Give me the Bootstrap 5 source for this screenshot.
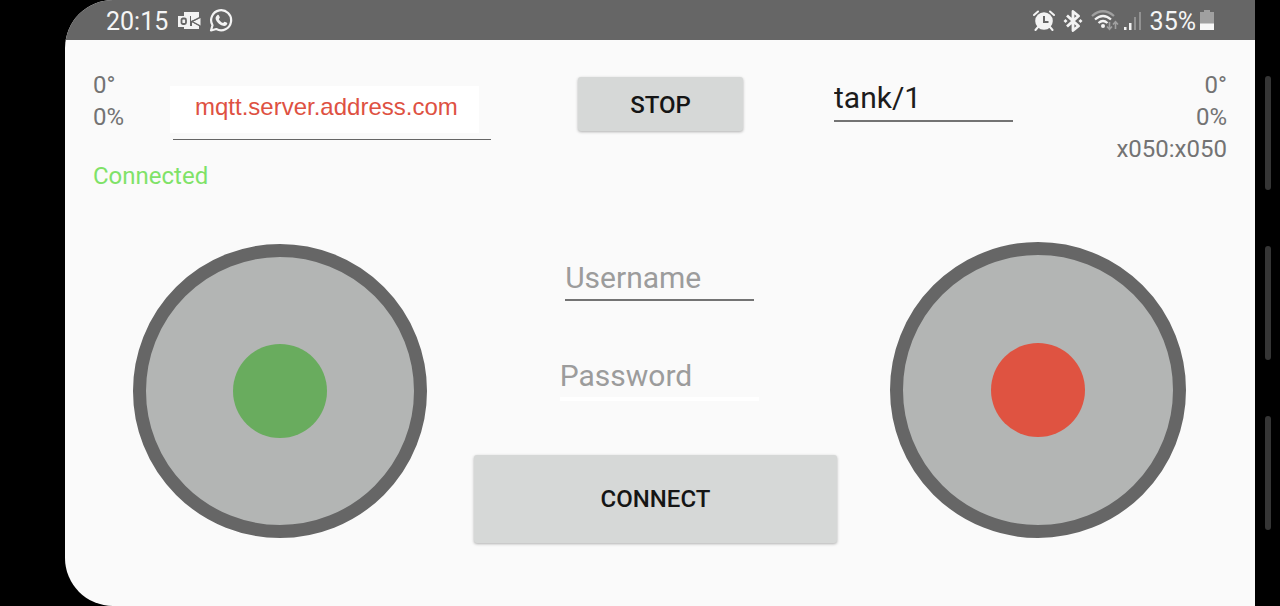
<!DOCTYPE html>
<html lang="en">
<head>
<meta charset="utf-8">
<meta name="viewport" content="width=device-width, initial-scale=1">
<title>Tank remote</title>
<link href="https://cdn.jsdelivr.net/npm/bootstrap@5.3.0/dist/css/bootstrap.min.css" rel="stylesheet">
<style>
  body { background: #000; color: #737373; font-family: Roboto, "Liberation Sans", sans-serif; font-size: 24px; line-height: 32px; }
  .bezel-left { flex: 0 0 65px; }
  .bezel-right { flex: 0 0 25px; padding-top: 76px; gap: 56px; }
  .edge-bar { width: 6px; height: 114px; background: #353535; }
  .screen { background: #fafafa; border-radius: 48px 0 0 48px; overflow: hidden; min-width: 0; }
  .status-bar { background: #666; color: #f5f5f5; height: 40px; padding: 2px 41px 0 41px; font-size: 25px; }
  .status-bar span { padding-top: 2px; }
  .status-left { gap: 6px; }
  .controls { padding: 29px 28px 0; }
  .top-grid { display: grid; grid-template-columns: minmax(0, 77fr) minmax(0, 321fr) minmax(0, 87fr) minmax(0, 165fr) minmax(0, 91fr) minmax(0, 179fr) minmax(0, 214fr); align-items: start; }
  .stick-grid { display: grid; grid-template-columns: 40fr 294fr 47fr 363fr 53fr 296fr 41fr; align-items: end; margin-top: 50px; }
  .col-2nd { grid-column: 2; } .col-4th { grid-column: 4; } .col-6th { grid-column: 6; } .col-7th { grid-column: 7; }
  .link-state { color: #7fe268; margin-top: 27px; }
  .server-field { margin-top: 17px; }
  .server-field::after { content: ""; display: block; height: 1px; margin: 6px 0 0 3px; background: #666; }
  .server-input { width: calc(100% - 12px); height: 47px; padding: 0 0 6px 25px; border: 0; border-radius: 0; background: #fff; color: #de5142; font: 24px "Liberation Sans", Arial, sans-serif; }
  .line-input { width: 100%; height: 44px; padding: 0 0 2px; border: 0; border-bottom: 2px solid #737373; border-radius: 0; background: transparent; color: #1c1c1c; font-size: 30px; }
  .line-input::placeholder { color: #9c9c9c; opacity: 1; }
  .topic-input { height: 45px; }
  .user-input { width: 52%; }
  .pass-input { width: 55%; height: 46px; border-bottom: 4px solid #fff; }
  .key-btn { background: #d6d8d7; color: #151515; border: 0; border-radius: 3px; font-size: 24px; font-weight: 500; box-shadow: 0 1px 3px rgba(0, 0, 0, .3); }
  .key-btn:hover { background: #cacccb; }
  .stop-btn { height: 54px; margin-top: 8px; padding-top: 8px; }
  .connect-btn { height: 88px; }
  .stick { aspect-ratio: 1; border: 13px solid #666; border-radius: 50%; background: #b3b5b4; margin-bottom: 5px; }
  .knob { width: 35%; aspect-ratio: 1; border-radius: 50%; }
  .knob-green { background: #69ac5e; }
  .knob-red { background: #df5341; }
  .form-stack { gap: 54px; }
</style>
</head>
<body>
<div class="d-flex min-vh-100">
  <div class="bezel-left"></div>
  <div class="screen flex-grow-1">
    <header class="status-bar d-flex align-items-center justify-content-between">
      <div class="status-left d-flex align-items-center">
        <span>20:15</span>
        <svg class="ms-1" width="24" height="22" viewBox="0 0 24 22" aria-hidden="true">
          <path d="M6 2h15v6l-8 3v-5H6zM6 19v-3h8v-4l7 4v3z" fill="#f3f3f3"/>
          <path d="M14.500 11.800L22.500 8v8z" fill="#f3f3f3"/>
          <path d="M22.500 7L14 11.500l8.500 4.500" fill="none" stroke="#666" stroke-width="1.400"/>
          <rect x="0" y="6" width="12" height="11" fill="#f3f3f3"/>
          <rect x="3.500" y="8.500" width="4.500" height="5.500" rx="1.500" fill="none" stroke="#666" stroke-width="1.800"/>
        </svg>
        <svg width="26" height="24" viewBox="0 0 26 24" aria-hidden="true">
          <path d="M3 21.500l1.500-5.200A10 10 0 1 1 8.300 20z" fill="none" stroke="#f3f3f3" stroke-width="2.200" stroke-linejoin="round"/>
          <path d="M9.200 6.200c.6-.6 1.500-.5 1.800.2l.8 1.900c.2.500-.7 1.400-1 1.900 1 1.900 2.400 3.100 4.300 3.900.5-.5 1.200-1.600 1.700-1.400l2.200 1.100c.6.400.1 1.800-.7 2.500-1.600 1.300-4 .6-5.900-.5-2-1.200-3.700-3.100-4.500-5-.7-1.800-.2-3.500 1.300-4.600z" fill="#f3f3f3"/>
        </svg>
      </div>
      <div class="d-flex align-items-center">
        <svg width="22" height="22" viewBox="0 0 22 22" aria-hidden="true">
          <circle cx="11" cy="11" r="8.800" fill="#f3f3f3"/>
          <path d="M11 6v6h4.500" fill="none" stroke="#666" stroke-width="2"/>
          <path d="M1 5L5 1.500M21 5L17 1.500M5 17l-2.500 3M17 17l2.500 3" stroke="#f3f3f3" stroke-width="2" stroke-linecap="round"/>
        </svg>
        <svg class="ms-2" width="20" height="22" viewBox="0 0 20 22" aria-hidden="true">
          <path d="M4 5.500l11.500 10.500-5.500 4.500V1.500l5.500 4.500L4 16.500" fill="none" stroke="#f3f3f3" stroke-width="2.800" stroke-linejoin="round"/>
          <path d="M.5 11l2-2 2 2-2 2zM15.500 11l2-2 2 2-2 2z" fill="#f3f3f3"/>
        </svg>
        <svg class="ms-2" width="28" height="24" viewBox="0 0 28 24" aria-hidden="true">
          <g fill="none" stroke-width="2.300">
            <path d="M1 7Q12 -2.500 23 7" stroke="#a0a0a0"/>
            <path d="M4 10.500Q12 3.500 20 10.500M7.500 14Q12 10 16.500 14" stroke="#f3f3f3"/>
            <path d="M18.500 13v7M16 17.500l2.500 2.700 2.500-2.700M24.500 20v-7M22 15.500l2.500-2.700 2.500 2.700" stroke="#a0a0a0" stroke-width="1.600"/>
          </g>
          <circle cx="12" cy="17" r="2" fill="#f3f3f3"/>
        </svg>
        <svg class="ms-1" width="19" height="22" viewBox="0 0 19 22" aria-hidden="true">
          <path d="M1 17h2.500v3H1zM6 13h2.500v7H6z" fill="#f3f3f3"/>
          <path d="M11 7h2v13h-2zM16 2h2v18h-2z" fill="#929292"/>
        </svg>
        <span class="ms-2">35%</span>
        <svg class="ms-1" width="14" height="22" viewBox="0 0 14 22" aria-hidden="true">
          <path d="M0 2h4V0h6v2h4v12H0z" fill="#a0a0a0"/>
          <path d="M0 13.500h14v6.500H0z" fill="#f8f8f8"/>
        </svg>
      </div>
    </header>

    <main class="controls">
      <section class="top-grid">
        <div class="text-nowrap">
          <div>0°</div>
          <div>0%</div>
          <div class="link-state" role="status">Connected</div>
        </div>
        <div class="server-field col-2nd">
          <input class="server-input d-block" type="text" aria-label="Server address" value="mqtt.server.address.com">
        </div>
        <button class="btn key-btn stop-btn col-4th" type="button">STOP</button>
        <input class="line-input topic-input col-6th mt-2" type="text" aria-label="Topic" value="tank/1">
        <div class="col-7th text-end text-nowrap">
          <div>0°</div>
          <div>0%</div>
          <div>x050:x050</div>
        </div>
      </section>

      <section class="stick-grid">
        <div class="stick col-2nd d-flex align-items-center justify-content-center" role="img" aria-label="Left joystick">
          <div class="knob knob-green"></div>
        </div>
        <form class="form-stack col-4th d-flex flex-column align-items-center">
          <input class="line-input user-input ms-2" type="text" placeholder="Username" aria-label="Username">
          <input class="line-input pass-input ms-2" type="password" placeholder="Password" aria-label="Password">
          <button class="btn key-btn connect-btn w-100" type="button">CONNECT</button>
        </form>
        <div class="stick col-6th d-flex align-items-center justify-content-center" role="img" aria-label="Right joystick">
          <div class="knob knob-red"></div>
        </div>
      </section>
    </main>
  </div>
  <div class="bezel-right d-flex flex-column align-items-center">
    <div class="edge-bar rounded-pill"></div>
    <div class="edge-bar rounded-pill"></div>
    <div class="edge-bar rounded-pill"></div>
  </div>
</div>
<script src="https://cdn.jsdelivr.net/npm/bootstrap@5.3.0/dist/js/bootstrap.bundle.min.js"></script>
</body>
</html>
